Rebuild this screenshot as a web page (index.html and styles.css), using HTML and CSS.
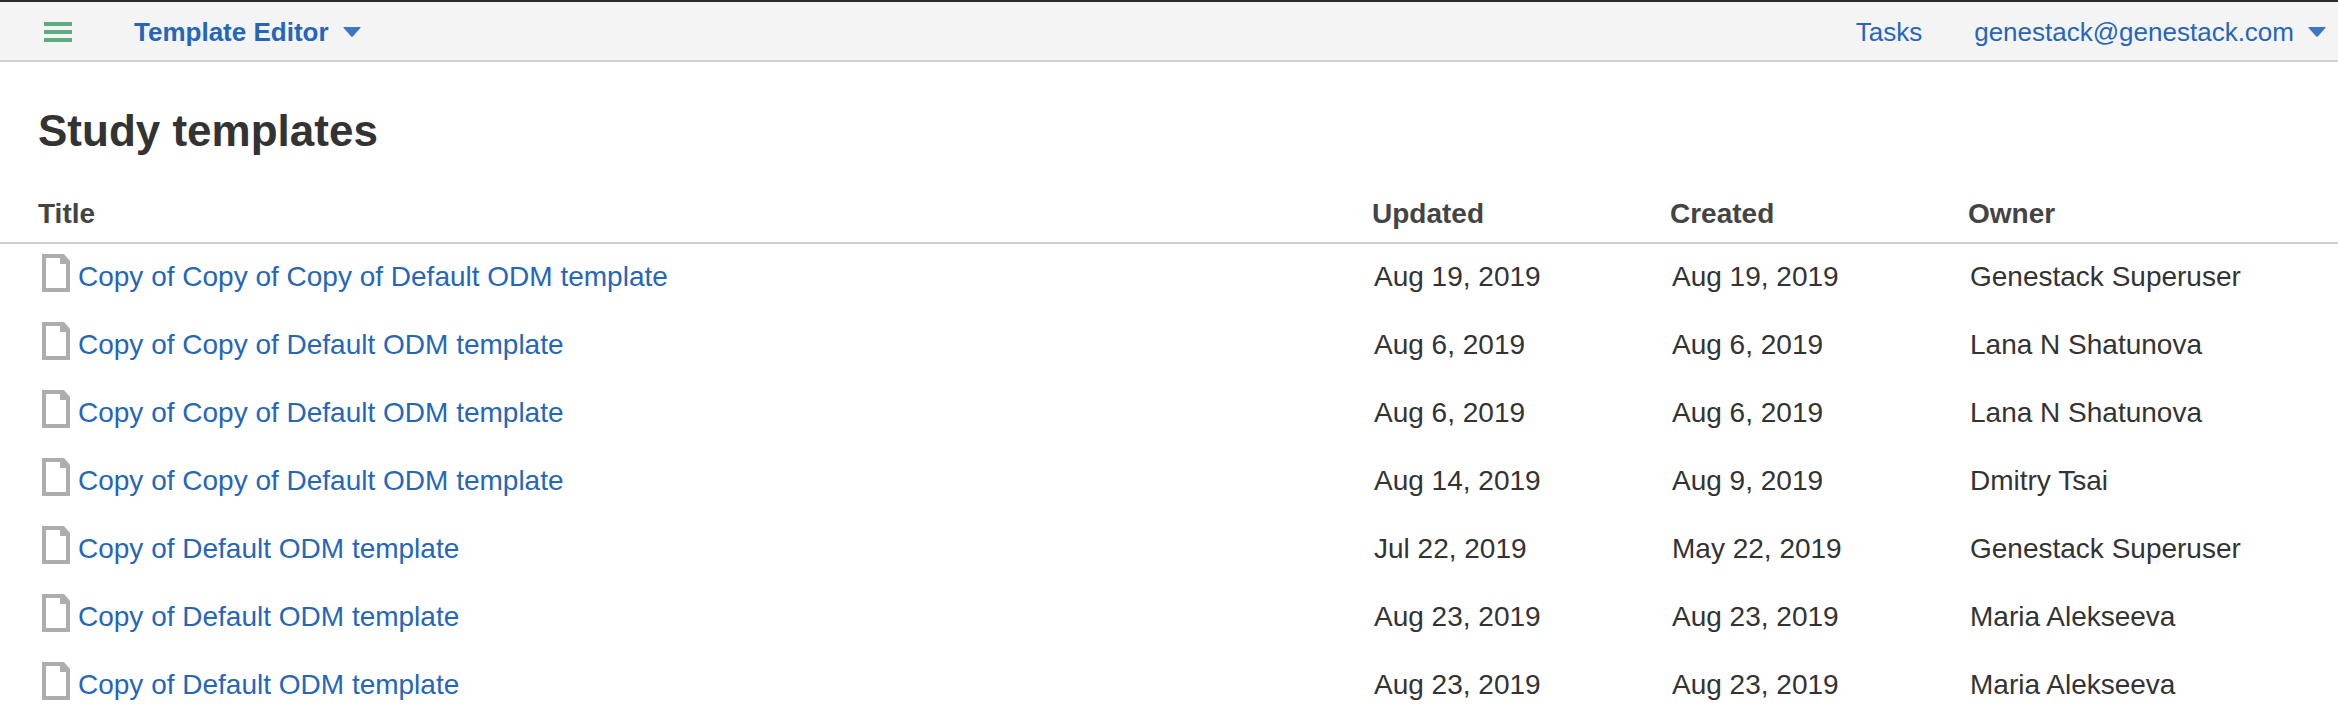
FILE: index.html
```
<!DOCTYPE html>
<html lang="en">
<head>
<meta charset="utf-8">
<title>Template Editor</title>
<link rel="stylesheet" href="styles.css">
</head>
<body>
<svg class="sprite" aria-hidden="true">
  <symbol id="doc" viewBox="0 0 28 38">
    <path fill="#adadad" fill-rule="evenodd" d="M0 0H22L28 7V38H0ZM4 4V34H24V10H18V4Z"/>
  </symbol>
  <symbol id="caret" viewBox="0 0 18 10">
    <path fill="#3d76c2" d="M1 0H17Q18 0 17.400 1L9.800 9.500Q9 10 8.200 9.500L.6 1Q0 0 1 0Z"/>
  </symbol>
</svg>
<header class="topbar">
  <button class="menu" type="button" aria-label="Menu">
    <svg width="28" height="20" viewBox="0 0 28 20"><path fill="#5bad80" d="M0 0H28V4H0ZM0 8H28V12H0ZM0 16H28V20H0Z"/></svg>
  </button>
  <button class="app" type="button">Template Editor <svg class="caret"><use href="#caret"/></svg></button>
  <nav class="account">
    <a href="#">Tasks</a>
    <button type="button">genestack@genestack.com <svg class="caret"><use href="#caret"/></svg></button>
  </nav>
</header>
<main>
  <h1>Study templates</h1>
  <table>
    <thead>
      <tr><th class="title">Title</th><th class="date">Updated</th><th class="date">Created</th><th class="owner">Owner</th></tr>
    </thead>
    <tbody>
      <tr><td><a href="#"><svg class="doc"><use href="#doc"/></svg>Copy of Copy of Copy of Default ODM template</a></td><td>Aug 19, 2019</td><td>Aug 19, 2019</td><td>Genestack Superuser</td></tr>
      <tr><td><a href="#"><svg class="doc"><use href="#doc"/></svg>Copy of Copy of Default ODM template</a></td><td>Aug 6, 2019</td><td>Aug 6, 2019</td><td>Lana N Shatunova</td></tr>
      <tr><td><a href="#"><svg class="doc"><use href="#doc"/></svg>Copy of Copy of Default ODM template</a></td><td>Aug 6, 2019</td><td>Aug 6, 2019</td><td>Lana N Shatunova</td></tr>
      <tr><td><a href="#"><svg class="doc"><use href="#doc"/></svg>Copy of Copy of Default ODM template</a></td><td>Aug 14, 2019</td><td>Aug 9, 2019</td><td>Dmitry Tsai</td></tr>
      <tr><td><a href="#"><svg class="doc"><use href="#doc"/></svg>Copy of Default ODM template</a></td><td>Jul 22, 2019</td><td>May 22, 2019</td><td>Genestack Superuser</td></tr>
      <tr><td><a href="#"><svg class="doc"><use href="#doc"/></svg>Copy of Default ODM template</a></td><td>Aug 23, 2019</td><td>Aug 23, 2019</td><td>Maria Alekseeva</td></tr>
      <tr><td><a href="#"><svg class="doc"><use href="#doc"/></svg>Copy of Default ODM template</a></td><td>Aug 23, 2019</td><td>Aug 23, 2019</td><td>Maria Alekseeva</td></tr>
    </tbody>
  </table>
</main>
</body>
</html>
```

FILE: styles.css
```
* {
  box-sizing: border-box;
}

body {
  margin: 0;
  background: #fff;
  color: #333;
  font-family: "Liberation Sans", Arial, sans-serif;
  font-size: 28px;
  line-height: 32px;
}

.sprite {
  display: none;
}

a,
button {
  color: #2566b9;
  text-decoration: none;
}

button {
  display: flex;
  align-items: center;
  gap: 14px;
  padding: 0;
  border: 0;
  background: none;
  font: inherit;
}

.topbar {
  display: flex;
  align-items: center;
  padding: 14px 12px 12px 44px;
  border-top: 2px solid #2a292b;
  border-bottom: 2px solid #d0d0d0;
  background: #f4f4f4;
  font-size: 26px;
}

.app {
  margin-left: 62px;
  font-weight: bold;
}

.account {
  display: flex;
  align-items: center;
  gap: 52px;
  margin-left: auto;
}

.caret {
  width: 18px;
  height: 10px;
}

h1 {
  margin: 0;
  padding: 44px 38px 42px;
  font-size: 44px;
  line-height: 50px;
}

table {
  width: 100%;
  border-collapse: separate;
  border-spacing: 0;
  table-layout: fixed;
}

th {
  padding: 0 0 12px;
  border-bottom: 2px solid #d0d0d0;
  color: #444;
  text-align: left;
}

.title {
  padding-left: 38px;
}

.date {
  width: 298px;
}

.owner {
  width: 370px;
}

td {
  height: 68px;
  padding: 0 2px 2px;
}

td:first-child {
  padding-left: 42px;
}

td a {
  display: flex;
  align-items: center;
}

.doc {
  width: 28px;
  height: 38px;
  margin: 0 8px 8px 0;
}
```
